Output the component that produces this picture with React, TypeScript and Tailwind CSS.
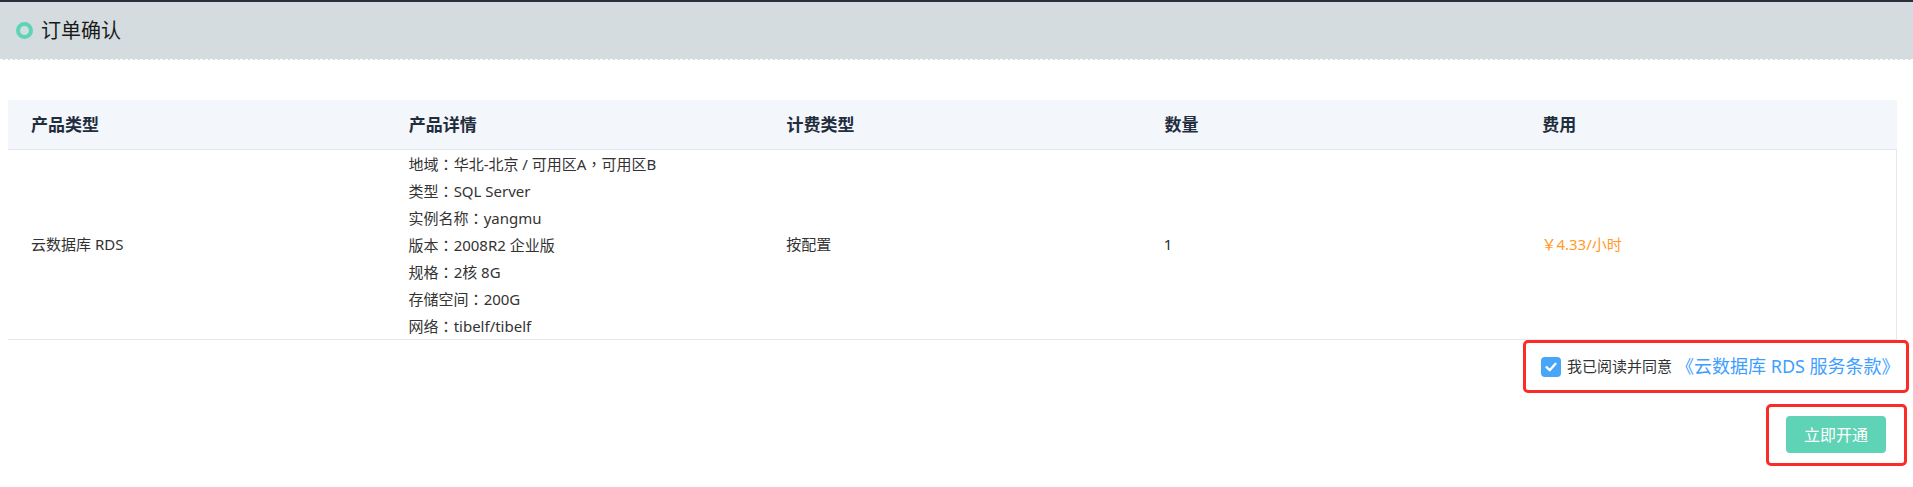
import React from "react";

const font = { fontFamily: "'Noto Sans', 'Noto Sans CJK SC', sans-serif" };
const tc = { fontFamily: "'Noto Sans CJK TC', sans-serif" };

const details: [string, React.ReactNode][] = [
  ["地域", <>华北-北京 / 可用区A<span style={tc}>，</span>可用区B</>],
  ["类型", "SQL Server"],
  ["实例名称", "yangmu"],
  ["版本", "2008R2 企业版"],
  ["规格", "2核 8G"],
  ["存储空间", "200G"],
  ["网络", "tibelf/tibelf"],
];

export default function App() {
  return (
    <div className="w-[1913px] h-[487px] bg-white overflow-hidden" style={font}>
      <div className="h-[2px] bg-[#2b2e38]" />
      <div className="h-[58px] bg-[#d5dcdf] border-b border-dashed border-white flex items-center pl-4">
        <span className="w-[17px] h-[17px] rounded-full border-[4px] border-[#5dd5b4]" />
        <span className="ml-2 text-[20px] text-[#1a1a1a]">订单确认</span>
      </div>

      <div className="mt-10 ml-2 w-[1889px]">
        <div className="grid grid-cols-5 h-[50px] items-center bg-[#f3f6fa] border-b border-[#e1e6ec] text-[17px] font-bold text-[#1f2d3d]">
          <div className="pl-[23px]">产品类型</div>
          <div className="pl-[23px]">产品详情</div>
          <div className="pl-[23px]">计费类型</div>
          <div className="pl-[23px]">数量</div>
          <div className="pl-[23px]">费用</div>
        </div>
        <div className="grid grid-cols-5 items-center border-b border-r border-[#e4e9ee] text-[15px] text-[#333]">
          <div className="pl-[23px]">云数据库 RDS</div>
          <div className="pl-[23px] flex flex-col">
            {details.map(([k, v]) => (
              <div key={k} className="leading-[27px] h-[27px] whitespace-nowrap">
                {k}
                <span style={tc}>：</span>
                {v}
              </div>
            ))}
          </div>
          <div className="pl-[23px]">按配置</div>
          <div className="pl-[23px] text-[#1f2d3d]">1</div>
          <div className="pl-[23px] text-[#ff9b26]">￥4.33/小时</div>
        </div>
      </div>

      <div className="flex justify-end pr-[4px]">
        <div className="w-[386px] h-[53px] border-[3px] border-[#fb2b26] rounded-[5px] flex items-center pl-[15px]">
          <span className="w-[20px] h-[20px] rounded-[4px] bg-[#47a6f7] flex items-center justify-center">
            <svg width="14" height="14" viewBox="0 0 14 14" fill="none">
              <path d="M2.5 7.2 L5.7 10.2 L11.5 3.8" stroke="white" strokeWidth="2.4" strokeLinecap="round" strokeLinejoin="round" />
            </svg>
          </span>
          <span className="ml-[6px] text-[15px] text-[#333]">我已阅读并同意</span>
          <span className="ml-[4px] text-[18px] text-[#409eff] whitespace-nowrap">《云数据库 RDS 服务条款》</span>
        </div>
      </div>

      <div className="flex justify-end pr-[6px] mt-[11px]">
        <div className="border-[3px] border-[#fb2b26] rounded-[5px] pl-[17px] pr-[18px] pt-[9px] pb-[10px]">
          <button className="w-[100px] h-[37px] rounded-[4px] bg-[#5fd3b5] text-white text-[16px] flex items-center justify-center">
            立即开通
          </button>
        </div>
      </div>
    </div>
  );
}
